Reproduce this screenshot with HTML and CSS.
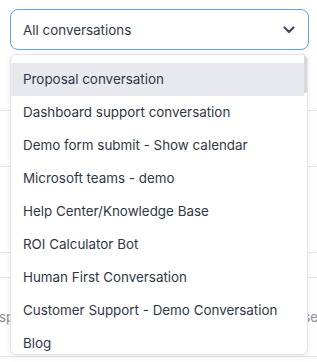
FILE: index.html
```html
<!DOCTYPE html>
<html lang="en">
<head>
  <meta charset="UTF-8" />
  <title>Conversation filter</title>
  <link rel="stylesheet" href="styles.css">
</head>
<body>
  <div class="page">
    <div class="select">
      <span>All conversations</span>
      <svg class="chevron" width="12" height="8" viewBox="0 0 12 8">
        <path d="M1.5 1.5 L6 6 L10.5 1.5" fill="none" stroke="#454f63" stroke-width="2.2" stroke-linecap="round" stroke-linejoin="round"/>
      </svg>
    </div>

    <!-- table behind the open menu -->
    <div class="rows">
      <div class="row r1"></div>
      <div class="row r2"></div>
      <div class="row r3"></div>
      <div class="row r4"></div>
      <div class="row r5"><span>sp</span><span>se</span></div>
    </div>

    <div class="menu">
      <ul class="options">
        <li class="active">Proposal conversation</li>
        <li>Dashboard support conversation</li>
        <li>Demo form submit - Show calendar</li>
        <li>Microsoft teams - demo</li>
        <li>Help Center/Knowledge Base</li>
        <li>ROI Calculator Bot</li>
        <li>Human First Conversation</li>
        <li>Customer Support - Demo Conversation</li>
        <li>Blog</li>
      </ul>
      <div class="thumb"></div>
    </div>
  </div>
</body>
</html>
```

FILE: styles.css
```css
body {
  margin: 0;
  background: #fff;
  font-family: Inter, 'Noto Sans', sans-serif;
  font-size: 13.4px;
  color: #2f3747;
}

.page {
  position: relative;
  width: 317px;
  height: 362px;
  overflow: hidden;
}

.select {
  margin: 9px 8px 0 10px;
  height: 41px;
  box-sizing: border-box;
  border: 1px solid #5f9ff4;
  border-radius: 8px;
  display: flex;
  align-items: center;
  justify-content: space-between;
  padding: 0 13px 0 12px;
}

.chevron {
  margin-top: 1px;
}

.row {
  border-bottom: 1px solid #e6e7ea;
}

.r1 { height: 60px; }
.r2 { height: 55px; }
.r3 { height: 85px; }
.r4 { height: 24px; }
.r5 {
  height: 78px;
  display: flex;
  align-items: center;
  justify-content: space-between;
  color: #8a8f98;
  margin: 0 -1px;
}

.menu {
  position: absolute;
  top: 54px;
  left: 10px;
  width: 298px;
  height: 301px;
  box-sizing: border-box;
  background: #fff;
  border: 1px solid #e3e4e7;
  border-radius: 6px;
  box-shadow: 0 2px 6px rgba(0, 0, 0, 0.08);
  overflow: hidden;
}

.options {
  list-style: none;
  margin: 0;
  padding: 8px 3px 0 0;
}

.options li {
  height: 33px;
  line-height: 33px;
  padding-left: 12px;
  white-space: nowrap;
}

.options li.active {
  background: #e8e9ed;
}

.thumb {
  position: absolute;
  top: 0;
  right: 0;
  width: 3px;
  height: 38px;
  background: #d8d9dd;
}
```
